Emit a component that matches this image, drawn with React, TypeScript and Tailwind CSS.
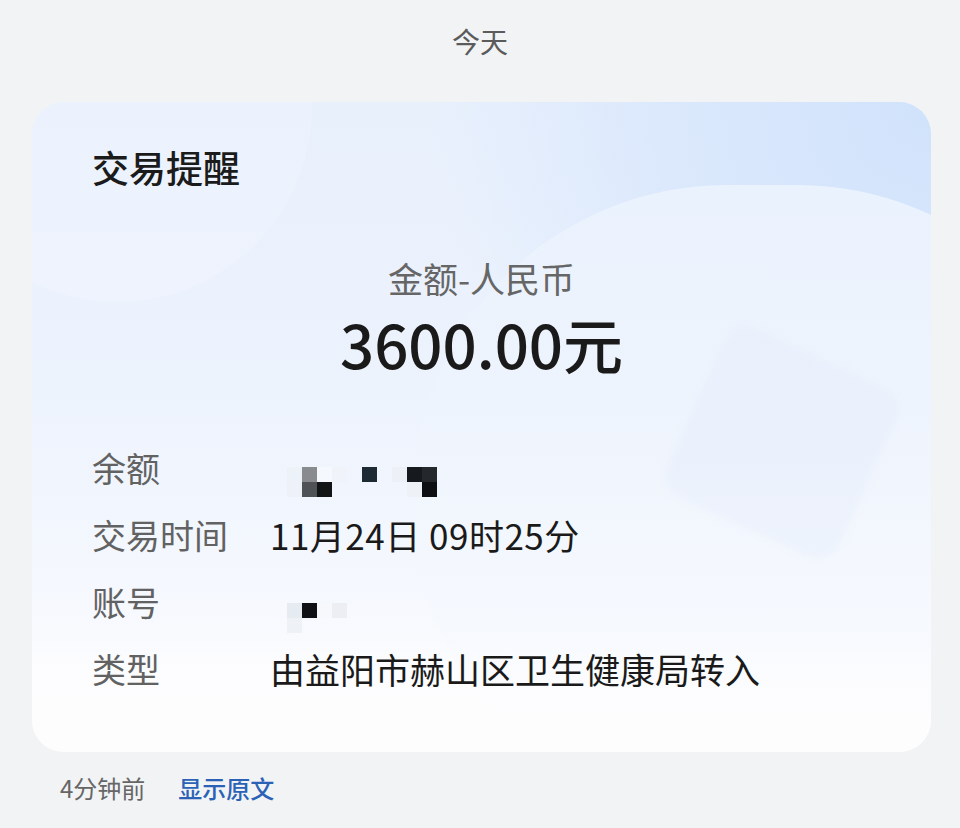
import React from 'react';

const font = { fontFamily: '"Noto Sans CJK SC", "Noto Sans", sans-serif' };

// pixelated redaction blocks, 15px cells
const balanceMosaic = [
    ['bg-[#edf2f9]', 'bg-[#898b8f]', 'bg-[#f5f8fc]', 'bg-[#f0f4fa]', 'bg-transparent', 'bg-[#1e2a33]', 'bg-transparent', 'bg-[#edf1f7]', 'bg-[#16191d]', 'bg-[#24272c]'],
    ['bg-[#eef2f8]', 'bg-[#505356]', 'bg-[#121416]', 'bg-transparent', 'bg-transparent', 'bg-transparent', 'bg-transparent', 'bg-transparent', 'bg-[#eef1f6]', 'bg-[#0d0f12]'],
];

const accountMosaic = [
    ['bg-[#e6eaf1]', 'bg-[#0f1114]', 'bg-[#f6f8fb]', 'bg-[#eceef3]', 'bg-transparent'],
    ['bg-[#eef1f6]', 'bg-transparent', 'bg-transparent', 'bg-transparent', 'bg-transparent'],
];

function Mosaic({ cells, className }: { cells: string[][]; className: string }) {
    return (
        <div className={`flex flex-col ${className}`}>
            {cells.map((row, i) => (
                <div key={i} className="flex">
                    {row.map((c, j) => (
                        <span key={j} className={`block w-[15px] h-[15px] ${c}`} />
                    ))}
                </div>
            ))}
        </div>
    );
}

export default function App() {
    return (
        <div className="min-h-[828px] bg-[#f2f3f5] pt-[21px]" style={font}>
            <p className="text-center text-[28px] leading-[40px] text-[#5b5b5b]">今天</p>

            <div className="relative mt-[41px] ml-[32px] w-[899px] rounded-[32px] overflow-hidden bg-[linear-gradient(180deg,#e8f0fc_0%,#edf3fd_45%,#f5f8fe_75%,#fdfdfe_92%)]">
                {/* background decorations */}
                <div className="absolute inset-0 bg-[radial-gradient(circle_at_100%_0%,#d0e2fb_0%,#dce9fc_25%,transparent_45%)]" />
                <div className="absolute -left-[110px] -top-[190px] w-[390px] h-[390px] rounded-full bg-[#f3f7fe]/35" />
                <div className="absolute left-[380px] top-[83px] w-[700px] h-[630px] rounded-full bg-[linear-gradient(180deg,#eaf2fd_0%,#eef4fd_35%,#f6f9fe_70%,#fdfdfe_90%)]" />
                <div className="absolute left-[655px] top-[248px] w-[190px] h-[185px] rotate-[25deg] rounded-[24px] bg-[#e3ecfa]/35 blur-[3px]" />
                <div className="absolute inset-x-0 bottom-0 h-[120px] bg-[linear-gradient(180deg,transparent,#fdfdfe_70%)]" />

                <div className="relative pt-[41px] pb-[60px] pl-[60px] pr-[40px]">
                    <h2 className="text-[37px] leading-[48px] font-medium text-[#1b1b1b]">交易提醒</h2>

                    <div className="mt-[65px] -ml-[60px] -mr-[40px] text-center">
                        <p className="text-[35px] leading-[44px] text-[#666666]">金额-人民币</p>
                        <p className="mt-[7px] text-[60px] leading-[72px] font-medium text-[#1a1a1a]">3600.00元</p>
                    </div>

                    <div className="mt-[66px] grid grid-cols-[178px_1fr] gap-y-[21px] text-[34px] leading-[46px]">
                        <span className="text-[#626262]">余额</span>
                        <div className="h-[46px]">
                            <Mosaic cells={balanceMosaic} className="mt-[22px] ml-[17px]" />
                        </div>

                        <span className="text-[#626262]">交易时间</span>
                        <span className="text-[35px] tracking-[0.5px] text-[#1a1a1a]">11月24日 09时25分</span>

                        <span className="text-[#626262]">账号</span>
                        <div className="h-[46px]">
                            <Mosaic cells={accountMosaic} className="mt-[24px] ml-[17px]" />
                        </div>

                        <span className="text-[#626262]">类型</span>
                        <span className="text-[35px] text-[#1a1a1a]">由益阳市赫山区卫生健康局转入</span>
                    </div>
                </div>
            </div>

            <div className="mt-[20px] pl-[60px] flex gap-[33px] text-[24px] leading-[32px]">
                <span className="text-[#666666]">4分钟前</span>
                <span className="text-[#2b62b5] font-medium">显示原文</span>
            </div>
        </div>
    );
}
